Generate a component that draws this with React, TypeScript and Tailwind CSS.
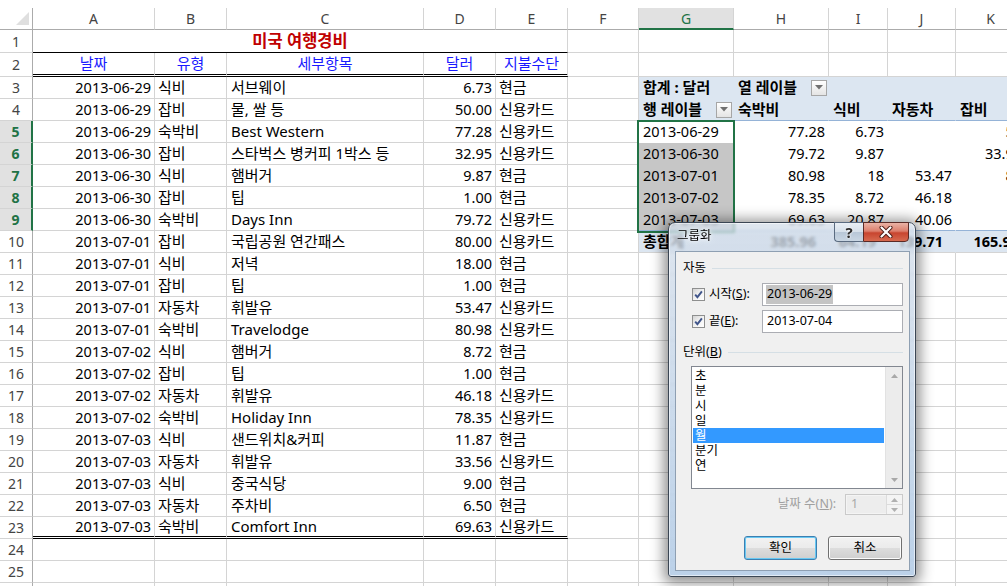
import React from "react";

type Spec = { t?: React.ReactNode; c?: string; r?: string; b?: string };

const W = [
  "w-[122px]",
  "w-[72px]",
  "w-[197px]",
  "w-[72px]",
  "w-[72px]",
  "w-[71px]",
  "w-[95px]",
  "w-[95px]",
  "w-[59px]",
  "w-[68px]",
  "w-[70px]",
];
const LETTERS = ["A", "B", "C", "D", "E", "F", "G", "H", "I", "J", "K"];

function Cell({ w, s }: { w: string; s: Spec }) {
  return (
    <div
      className={`${w} shrink-0 h-full flex items-center overflow-hidden whitespace-nowrap ${
        s.r ?? "border-r border-r-[#d4d4d4]"
      } ${s.b ?? "border-b border-b-[#d4d4d4]"} ${s.c ?? ""}`}
    >
      {s.t}
    </div>
  );
}

function RowHead({ n, sel }: { n: number; sel?: boolean }) {
  return (
    <div
      className={`w-[33px] shrink-0 h-full flex items-center justify-center text-[14px] border-b border-b-[#d4d4d4] ${
        sel
          ? "bg-[#e1e1e1] text-[#217346] font-bold border-r-2 border-r-[#217346]"
          : "text-[#444] border-r border-r-[#ababab]"
      }`}
    >
      {n}
    </div>
  );
}

function Dd() {
  return (
    <div className="ml-auto shrink-0 w-[16px] h-[16px] border border-[#a6a6a6] bg-linear-to-b from-white to-[#e4e4e4] flex items-center justify-center">
      <svg width="8" height="5" viewBox="0 0 8 5">
        <path d="M0 0H8L4 4.5Z" fill="#707070" />
      </svg>
    </div>
  );
}

const data: [string, string, string, string, string][] = [
  ["2013-06-29", "식비", "서브웨이", "6.73", "현금"],
  ["2013-06-29", "잡비", "물, 쌀 등", "50.00", "신용카드"],
  ["2013-06-29", "숙박비", "Best Western", "77.28", "신용카드"],
  ["2013-06-30", "잡비", "스타벅스 병커피 1박스 등", "32.95", "신용카드"],
  ["2013-06-30", "식비", "햄버거", "9.87", "현금"],
  ["2013-06-30", "잡비", "팁", "1.00", "현금"],
  ["2013-06-30", "숙박비", "Days Inn", "79.72", "신용카드"],
  ["2013-07-01", "잡비", "국립공원 연간패스", "80.00", "신용카드"],
  ["2013-07-01", "식비", "저녁", "18.00", "현금"],
  ["2013-07-01", "잡비", "팁", "1.00", "현금"],
  ["2013-07-01", "자동차", "휘발유", "53.47", "신용카드"],
  ["2013-07-01", "숙박비", "Travelodge", "80.98", "신용카드"],
  ["2013-07-02", "식비", "햄버거", "8.72", "현금"],
  ["2013-07-02", "잡비", "팁", "1.00", "현금"],
  ["2013-07-02", "자동차", "휘발유", "46.18", "신용카드"],
  ["2013-07-02", "숙박비", "Holiday Inn", "78.35", "신용카드"],
  ["2013-07-03", "식비", "샌드위치&커피", "11.87", "현금"],
  ["2013-07-03", "자동차", "휘발유", "33.56", "신용카드"],
  ["2013-07-03", "식비", "중국식당", "9.00", "현금"],
  ["2013-07-03", "자동차", "주차비", "6.50", "현금"],
  ["2013-07-03", "숙박비", "Comfort Inn", "69.63", "신용카드"],
];

const pv: string[][] = [
  ["2013-06-29", "77.28", "6.73", "", "50"],
  ["2013-06-30", "79.72", "9.87", "", "33.95"],
  ["2013-07-01", "80.98", "18", "53.47", "81"],
  ["2013-07-02", "78.35", "8.72", "46.18", "1"],
  ["2013-07-03", "69.63", "20.87", "40.06", ""],
];

const NR = "border-r border-r-transparent";
const NB = "border-b border-b-transparent";
const PB = "border-b border-b-[#95b3d7]";

function pivot(n: number): Spec[] {
  const F: Spec = {};
  if (n === 3) {
    return [
      F,
      { t: "합계 : 달러", c: "bg-[#dce6f1] font-bold pl-[4px]", r: NR, b: NB },
      {
        t: (
          <>
            <span>열 레이블</span>
            <Dd />
          </>
        ),
        c: "bg-[#dce6f1] font-bold pl-[4px] pr-[1px]",
        r: NR,
        b: NB,
      },
      { c: "bg-[#dce6f1]", r: NR, b: NB },
      { c: "bg-[#dce6f1]", r: NR, b: NB },
      { c: "bg-[#dce6f1]", r: NR, b: NB },
    ];
  }
  if (n === 4) {
    return [
      F,
      {
        t: (
          <>
            <span>행 레이블</span>
            <Dd />
          </>
        ),
        c: "bg-[#dce6f1] font-bold pl-[4px] pr-[1px]",
        r: NR,
        b: PB,
      },
      { t: "숙박비", c: "bg-[#dce6f1] font-bold pl-[4px]", r: NR, b: PB },
      { t: "식비", c: "bg-[#dce6f1] font-bold pl-[4px]", r: NR, b: PB },
      { t: "자동차", c: "bg-[#dce6f1] font-bold pl-[4px]", r: NR, b: PB },
      { t: "잡비", c: "bg-[#dce6f1] font-bold pl-[4px]", r: NR, b: PB },
    ];
  }
  if (n >= 5 && n <= 9) {
    const v = pv[n - 5];
    const b = n === 9 ? PB : NB;
    return [
      F,
      { t: v[0], c: `pl-[4px] text-[14.5px] ${n === 5 ? "bg-white" : "bg-[#c6c6c6]"}`, r: NR, b },
      { t: v[1], c: "justify-end pr-[3px] text-[14.5px]", r: NR, b },
      { t: v[2], c: "justify-end pr-[3px] text-[14.5px]", r: NR, b },
      { t: v[3], c: "justify-end pr-[3px] text-[14.5px]", r: NR, b },
      { t: v[4], c: "justify-end pr-[3px] text-[14.5px]", r: NR, b },
    ];
  }
  if (n === 10) {
    return [
      F,
      { t: "총합계", c: "bg-[#dce6f1] font-bold pl-[4px]", r: NR },
      { t: "385.96", c: "bg-[#dce6f1] font-bold text-[14.5px] justify-end pr-[12px]", r: NR },
      { t: "64.19", c: "bg-[#dce6f1] font-bold text-[14.5px] justify-end pr-[11px]", r: NR },
      { t: "139.71", c: "bg-[#dce6f1] font-bold text-[14.5px] justify-end pr-[12px]", r: NR },
      { t: "165.95", c: "bg-[#dce6f1] font-bold text-[14.5px] justify-end pr-[6px]", r: NR },
    ];
  }
  return [F, {}, {}, {}, {}, {}];
}

const DBL = "border-b-[3px] border-double border-b-black";

function Check() {
  return (
    <div className="w-[13px] h-[13px] shrink-0 border border-[#8e8f8f] bg-linear-to-br from-[#d4d4d4] via-[#f2f2f2] to-white flex items-center justify-center">
      <svg width="11" height="11" viewBox="0 0 11 11">
        <path d="M2.2 5.6 L4.4 8.2 L8.9 2.4" fill="none" stroke="#40558a" strokeWidth="1.9" />
      </svg>
    </div>
  );
}

function Tri({ up, color }: { up?: boolean; color: string }) {
  return (
    <svg width="7" height="4" viewBox="0 0 7 4">
      <path d={up ? "M0 4H7L3.5 0Z" : "M0 0H7L3.5 4Z"} fill={color} />
    </svg>
  );
}

const BTN =
  "h-[24px] rounded-[3px] border flex items-center justify-center text-[12.5px] text-black bg-[linear-gradient(#f2f2f2_0%,#ebebeb_50%,#dddddd_51%,#cfcfcf_100%)]";

function Dialog() {
  const items = ["초", "분", "시", "일", "월", "분기", "연"];
  return (
    <div className="absolute left-[668px] top-[222px] w-[248px] h-[355px] rounded-t-[7px] rounded-b-[3px] border border-[#3b4654] bg-linear-to-b from-[#d3dde9]/75 to-[#b4cce6]/90 backdrop-blur-[1.5px] shadow-[0_2px_14px_4px_rgba(0,0,0,0.45),inset_0_0_0_1px_rgba(255,255,255,0.55)] flex flex-col">
      <div className="h-[28px] shrink-0 flex items-start">
        <span className="pl-[8px] pt-[4px] text-[12.5px] text-black [text-shadow:0_0_6px_#fff,0_0_3px_#fff]">
          그룹화
        </span>
        <div className="ml-auto mr-[6px] -mt-[1px] flex">
          <div className="w-[29px] h-[20px] rounded-bl-[4px] border border-[#5a6b80] border-r-0 bg-[linear-gradient(#e9eff5_0%,#d6e0ea_48%,#b8c7d7_52%,#c9d6e3_100%)] flex items-center justify-center text-[15px] leading-none font-bold text-[#2a2a2a] [text-shadow:0_0_2px_#fff,0_0_2px_#fff]">
            ?
          </div>
          <div className="w-[46px] h-[20px] rounded-br-[4px] border border-[#5a2a26] bg-[linear-gradient(#eab3a6_0%,#dc7e6c_45%,#c8452f_55%,#d6694f_100%)] flex items-center justify-center">
            <svg width="14" height="12" viewBox="0 0 14 12">
              <path d="M2.5 1.5 L11.5 10.5 M11.5 1.5 L2.5 10.5" stroke="#4a1c16" strokeWidth="4" strokeLinecap="round" />
              <path d="M2.5 1.5 L11.5 10.5 M11.5 1.5 L2.5 10.5" stroke="#ffffff" strokeWidth="2.2" strokeLinecap="round" />
            </svg>
          </div>
        </div>
      </div>
      <div className="ml-[6px] mr-[5px] h-[320px] border border-[#8e9fb2] bg-[#f0f0f0] flex flex-col pl-[7px] pt-[8px] text-[12.5px] text-black">
        <div className="h-[16px] flex items-center">
          <span>자동</span>
          <div className="flex-1 h-px bg-[#d5dfe5] ml-[6px] mr-[6px]" />
        </div>
        <div className="mt-[7px] h-[23px] flex items-center">
          <div className="ml-[9px]">
            <Check />
          </div>
          <span className="ml-[4px]">
            시작(<u>S</u>):
          </span>
          <div className="ml-auto mr-[6px] w-[141px] h-[23px] border border-[#abadb3] bg-white flex items-center pl-[3px]">
            <span className="bg-[#c4c4c4] px-px">2013-06-29</span>
          </div>
        </div>
        <div className="mt-[4px] h-[23px] flex items-center">
          <div className="ml-[9px]">
            <Check />
          </div>
          <span className="ml-[4px]">
            끝(<u>E</u>):
          </span>
          <div className="ml-auto mr-[6px] w-[141px] h-[23px] border border-[#abadb3] bg-white flex items-center pl-[4px]">
            2013-07-04
          </div>
        </div>
        <div className="mt-[11px] h-[16px] flex items-center">
          <span>
            단위(<u>B</u>)
          </span>
          <div className="flex-1 h-px bg-[#d5dfe5] ml-[6px] mr-[6px]" />
        </div>
        <div className="mt-[6px] ml-[8px] w-[212px] h-[123px] border border-[#828790] bg-white flex">
          <div className="flex-1 pt-[1px] pl-[1px] pr-[1px]">
            {items.map((it) => (
              <div
                key={it}
                className={`h-[15px] leading-[15px] pl-[2px] ${
                  it === "월" ? "bg-[#3399ff] text-white" : "text-black"
                }`}
              >
                {it}
              </div>
            ))}
          </div>
          <div className="w-[17px] bg-[#ececec] border-l border-l-[#e2e2e2] flex flex-col justify-between">
            <div className="h-[17px] flex items-center justify-center">
              <Tri up color="#a8a8a8" />
            </div>
            <div className="h-[17px] flex items-center justify-center">
              <Tri color="#a8a8a8" />
            </div>
          </div>
        </div>
        <div className="mt-[5px] h-[21px] flex items-center justify-end">
          <span className="text-[#a0a0a0]">
            날짜 수(<u>N</u>):
          </span>
          <div className="ml-[9px] mr-[6px] w-[58px] h-[21px] border border-[#cacaca] bg-[#f4f4f4] flex">
            <div className="flex-1 pl-[4px] flex items-center text-[#a8a8a8] bg-[#ededed] my-[1px] ml-[1px]">
              1
            </div>
            <div className="w-[16px] flex flex-col border-l border-l-[#dcdcdc]">
              <div className="flex-1 flex items-center justify-center border-b border-b-[#dcdcdc]">
                <Tri up color="#b0b0b0" />
              </div>
              <div className="flex-1 flex items-center justify-center">
                <Tri color="#b0b0b0" />
              </div>
            </div>
          </div>
        </div>
        <div className="mt-[21px] h-[24px] flex justify-end gap-[11px] mr-[7px]">
          <div className={`${BTN} w-[73px] border-[#3c7fb1] shadow-[inset_0_0_0_1px_#68c8f2]`}>확인</div>
          <div className={`${BTN} w-[74px] border-[#707070] shadow-[inset_0_0_0_1px_#fcfcfc]`}>취소</div>
        </div>
      </div>
    </div>
  );
}

export default function App() {
  const rows: React.ReactNode[] = [];

  rows.push(
    <div key={1} className="flex h-[23px]">
      <RowHead n={1} />
      <div className="w-[535px] shrink-0 h-full flex items-center justify-center border-r border-r-[#d4d4d4] border-b border-b-black font-bold text-[#c00000] text-[16.5px]">
        미국 여행경비
      </div>
      {pivot(1).map((s, i) => (
        <Cell key={i} w={W[5 + i]} s={s} />
      ))}
    </div>
  );

  const heads = ["날짜", "유형", "세부항목", "달러", "지불수단"];
  rows.push(
    <div key={2} className="flex h-[24px]">
      <RowHead n={2} />
      {heads.map((h, i) => (
        <Cell key={i} w={W[i]} s={{ t: h, c: "justify-center text-[#1a1aff]", b: DBL }} />
      ))}
      {pivot(2).map((s, i) => (
        <Cell key={"p" + i} w={W[5 + i]} s={s} />
      ))}
    </div>
  );

  for (let n = 3; n <= 26; n++) {
    const d = data[n - 3];
    const b = n === 23 ? DBL : undefined;
    const left: Spec[] = d
      ? [
          { t: d[0], c: "justify-end pr-[3px] text-[14.5px]", b },
          { t: d[1], c: "pl-[3px]", b },
          { t: d[2], c: "pl-[4px]", b },
          { t: d[3], c: "justify-end pr-[3px] text-[14.5px]", b },
          { t: d[4], c: "pl-[3px]", b },
        ]
      : [{}, {}, {}, {}, {}];
    const all = [...left, ...pivot(n)];
    rows.push(
      <div key={n} className="flex h-[22px]">
        <RowHead n={n} sel={n >= 5 && n <= 9} />
        {all.map((s, i) => (
          <Cell key={i} w={W[i]} s={s} />
        ))}
      </div>
    );
  }

  return (
    <div className="relative w-[1007px] h-[586px] overflow-hidden bg-white text-black text-[15px] font-['Noto_Sans','Noto_Sans_CJK_KR',sans-serif]">
      <div className="h-[8px] bg-white" />
      <div className="flex h-[22px]">
        <div className="w-[33px] shrink-0 h-full border-r border-r-[#ababab] border-b border-b-[#ababab] flex items-end justify-end pr-[3px] pb-[4px]">
          <svg width="13" height="13" viewBox="0 0 13 13">
            <polygon points="13,0 13,13 0,13" fill="#dfdfdf" />
          </svg>
        </div>
        {LETTERS.map((l, i) => (
          <div
            key={l}
            className={`${W[i]} shrink-0 h-full flex items-center justify-center text-[14px] border-r border-r-[#d4d4d4] ${
              l === "G"
                ? "bg-[#e1e1e1] text-[#217346] border-b-2 border-b-[#217346]"
                : "text-[#444] border-b border-b-[#ababab]"
            }`}
          >
            {l}
          </div>
        ))}
      </div>
      {rows}
      <div className="absolute left-[637px] top-[120px] w-[98px] h-[113px] border-2 border-[#217346] pointer-events-none" />
      <Dialog />
    </div>
  );
}
